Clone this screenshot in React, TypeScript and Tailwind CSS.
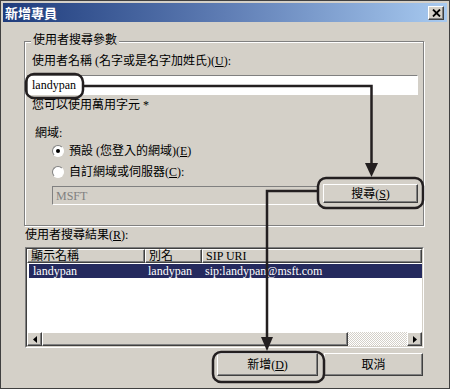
import React from "react";

const raised =
  "border border-t-white border-l-white border-r-[#404040] border-b-[#404040] shadow-[inset_-1px_-1px_0_#808080]";
const sunken =
  "border border-t-[#808080] border-l-[#808080] border-r-white border-b-white";

const Radio = ({ checked }: { checked?: boolean }) => (
  <span
    className={`${sunken} flex h-[12px] w-[12px] items-center justify-center rounded-full bg-white`}
  >
    {checked && <span className="h-[4px] w-[4px] rounded-full bg-black" />}
  </span>
);

const Arrow = ({ dir }: { dir: "left" | "right" }) => (
  <svg width="4" height="7" viewBox="0 0 4 7">
    {dir === "left" ? (
      <path d="M4 0 L0 3.5 L4 7 Z" fill="#000" />
    ) : (
      <path d="M0 0 L4 3.5 L0 7 Z" fill="#000" />
    )}
  </svg>
);

const Annotations = () => (
  <svg
    className="pointer-events-none absolute left-0 top-0"
    width="450"
    height="389"
    viewBox="0 0 450 389"
  >
    <g fill="none" stroke="#231f20" strokeWidth="2.5">
      <rect x="25" y="73" width="57" height="24" rx="8" />
      <path d="M82 85 H370.5 V163" />
      <rect x="317" y="177" width="105" height="30" rx="8" />
      <path d="M317 190 H266 V337" />
      <rect x="212" y="351" width="111" height="30" rx="8" />
    </g>
    <path d="M364 162 H377 L370.5 176 Z" fill="#231f20" />
    <path d="M260 336 H272 L266 350 Z" fill="#231f20" />
  </svg>
);

const App = () => {
  return (
    <div className="relative h-[389px] w-[450px] overflow-hidden border border-[#404040] bg-[#d4d0c8] font-['Liberation_Serif','Noto_Sans_CJK_TC',serif] text-[12px] leading-[14px] text-black">
      <div className="p-[2px]">
        <div className="flex h-[19px] items-center justify-between bg-linear-to-r from-[#1f3c7c] via-[#5f7db4] to-[#a8caf0] pl-[2px] pr-[3px]">
          <span className="font-['Noto_Sans_CJK_TC',sans-serif] text-[13px] font-bold text-white">
            新增專員
          </span>
          <span
            className={`${raised} flex h-[14px] w-[16px] items-center justify-center bg-[#d4d0c8]`}
          >
            <svg width="9" height="8" viewBox="0 0 9 8">
              <path d="M1 0.5 L8 7.5 M8 0.5 L1 7.5" stroke="#000" strokeWidth="1.8" />
            </svg>
          </span>
        </div>

        <div className="relative ml-[21px] mt-[19px] h-[185px] w-[400px] border border-[#808080] shadow-[inset_1px_1px_0_#ffffff,1px_1px_0_#ffffff]">
          <span className="absolute -top-[9px] left-[6px] bg-[#d4d0c8] px-[2px]">
            使用者搜尋參數
          </span>
          <div className="flex flex-col pt-[12px]">
            <span className="ml-[7px]">
              使用者名稱 (名字或是名字加姓氏)(<u>U</u>):
            </span>
            <div
              className={`${sunken} ml-[2px] mt-[7px] flex h-[20px] w-[391px] items-center bg-white pl-[4px]`}
            >
              landypan
            </div>
            <span className="ml-[7px] mt-[3px]">您可以使用萬用字元 *</span>
            <span className="ml-[10px] mt-[14px]">網域:</span>
            <div className="ml-[27px] mt-[4px] flex items-center gap-[5px]">
              <Radio checked />
              <span>
                預設 (您登入的網域)(<u>E</u>)
              </span>
            </div>
            <div className="ml-[27px] mt-[7px] flex items-center gap-[5px]">
              <Radio />
              <span>
                自訂網域或伺服器(<u>C</u>):
              </span>
            </div>
            <div className="ml-[27px] mt-[5px] flex items-start">
              <div
                className={`${sunken} mt-[2px] flex h-[19px] w-[266px] items-center bg-[#d4d0c8] pl-[3px] text-[#808080]`}
              >
                MSFT
              </div>
              <button
                className={`${raised} ml-[5px] flex h-[19px] w-[95px] items-center justify-center bg-[#d4d0c8]`}
              >
                搜尋(<u>S</u>)
              </button>
            </div>
          </div>
        </div>

        <div className="ml-[22px] mt-[2px]">
          使用者搜尋結果(<u>R</u>):
        </div>

        <div className={`${sunken} ml-[22px] mt-[5px] h-[101px] w-[399px]`}>
          <div className="flex h-full flex-col border border-t-[#404040] border-l-[#404040] border-r-[#d4d0c8] border-b-[#d4d0c8] bg-white">
            <div className="flex h-[14px] bg-[#d4d0c8]">
              <div className={`${raised} w-[118px] pl-[3px] leading-[12px]`}>顯示名稱</div>
              <div className={`${raised} w-[57px] pl-[3px] leading-[12px]`}>別名</div>
              <div className={`${raised} flex-1 pl-[3px] leading-[12px]`}>SIP URI</div>
            </div>
            <div className="ml-[2px] mt-[1px] flex h-[14px] bg-[#252a5e] text-white">
              <span className="w-[116px] pl-[4px]">landypan</span>
              <span className="w-[57px] pl-[3px]">landypan</span>
              <span className="flex-1 pl-[3px]">sip:landypan@msft.com</span>
            </div>
            <div className="flex-1" />
            <div className="flex h-[14px]">
              <div
                className={`${raised} flex w-[15px] items-center justify-center bg-[#d4d0c8]`}
              >
                <Arrow dir="left" />
              </div>
              <div className={`${raised} w-[306px] bg-[#d4d0c8]`} />
              <div className="flex-1 bg-[repeating-conic-gradient(#ffffff_0_25%,#d4d0c8_0_50%)] bg-[length:2px_2px]" />
              <div
                className={`${raised} flex w-[15px] items-center justify-center bg-[#d4d0c8]`}
              >
                <Arrow dir="right" />
              </div>
            </div>
          </div>
        </div>

        <div className="ml-[214px] mt-[5px] flex gap-[6px]">
          <button
            className={`${raised} flex h-[23px] w-[101px] items-center justify-center bg-[#d4d0c8]`}
          >
            新增(<u>D</u>)
          </button>
          <button
            className={`${raised} flex h-[23px] w-[99px] items-center justify-center bg-[#d4d0c8]`}
          >
            取消
          </button>
        </div>
      </div>
      <Annotations />
    </div>
  );
};

export default App;
